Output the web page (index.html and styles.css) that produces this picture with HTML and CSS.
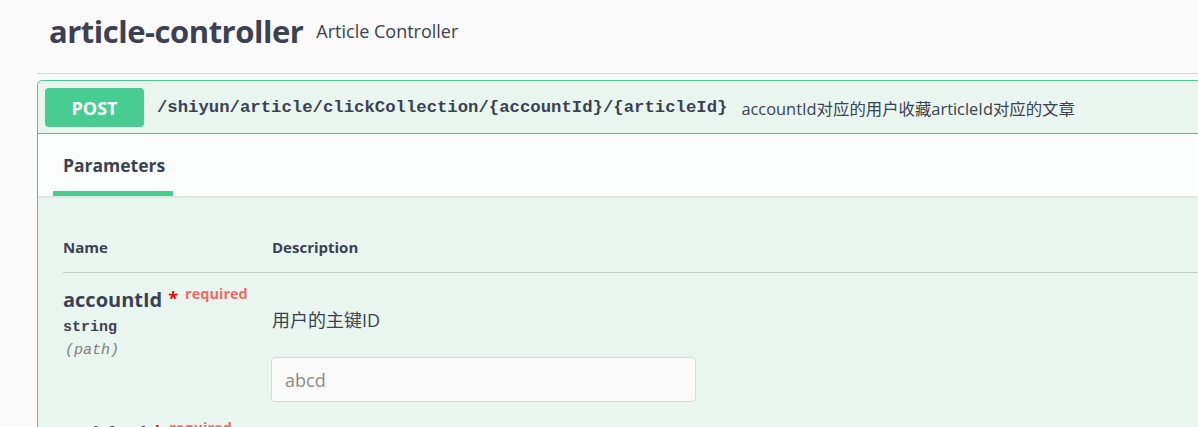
FILE: index.html
```html
<!DOCTYPE html>
<html lang="zh-CN">
<head>
<meta charset="utf-8">
<title>article-controller</title>
<link rel="stylesheet" href="styles.css">
</head>
<body>
<div class="page">
  <section class="tag">
    <h3 class="tag-title">
      <span class="tag-name">article-controller</span>
      <small class="tag-desc">Article Controller</small>
    </h3>
    <div class="opblock">
      <div class="summary">
        <span class="method">POST</span>
        <span class="path">/shiyun/article/clickCollection/{accountId}/{articleId}</span>
        <span class="summary-desc">accountId对应的用户收藏articleId对应的文章</span>
      </div>
      <div class="opbody">
        <div class="section-header">
          <div class="tab"><span class="tab-label">Parameters</span></div>
        </div>
        <div class="params">
          <div class="params-head">
            <div class="col-name">Name</div>
            <div class="col-desc">Description</div>
          </div>
          <div class="param-row">
            <div class="param-name">
              <div class="pname">accountId<span class="star">*</span><span class="req">required</span></div>
              <div class="ptype">string</div>
              <div class="pin">(path)</div>
            </div>
            <div class="param-desc">
              <div class="pdesc">用户的主键ID</div>
              <input class="pinput" type="text" placeholder="abcd">
            </div>
          </div>
          <div class="param-row">
            <div class="param-name">
              <div class="pname">articleId<span class="star">*</span><span class="req">required</span></div>
              <div class="ptype">string</div>
              <div class="pin">(path)</div>
            </div>
            <div class="param-desc">
              <div class="pdesc">文章的主键ID</div>
              <input class="pinput" type="text" placeholder="abcd">
            </div>
          </div>
        </div>
      </div>
    </div>
  </section>
</div>
</body>
</html>
```

FILE: styles.css
```css
html, body {
  margin: 0;
  padding: 0;
  background: #fafafa;
  overflow: hidden;
}
body {
  font-family: "Open Sans", "Noto Sans CJK SC", sans-serif;
  color: #3b4151;
}
.page {
  width: 1500px;
  padding-left: 37px;
}
.tag-title {
  margin: 0;
  display: flex;
  align-items: center;
  padding: 6px 0 16px 12px;
  height: 51px;
  border-bottom: 1px solid #d3d4d7;
}
.tag-name {
  font-size: 31px;
  font-weight: 700;
  letter-spacing: -0.48px;
  line-height: 51px;
}
.tag-desc {
  font-size: 18px;
  font-weight: 400;
  margin-left: 13px;
  padding-bottom: 2px;
}
.opblock {
  margin-top: 6px;
  border: 1px solid #49cc90;
  border-radius: 5px;
  background: #e8f6ef;
}
.summary {
  display: flex;
  align-items: center;
  padding: 7px 6px 6px 7px;
  border-bottom: 1px solid #49cc90;
}
.method {
  width: 99px;
  height: 39px;
  display: flex;
  align-items: center;
  justify-content: center;
  background: #49cc90;
  color: #fff;
  border-radius: 4px;
  font-size: 18px;
  font-weight: 700;
}
.path {
  padding: 0 12px 0 13px;
  font-family: "Liberation Mono", "DejaVu Sans Mono", monospace;
  font-size: 17.3px;
  font-weight: 700;
  color: #3b4151;
}
.summary-desc {
  font-size: 16.4px;
  margin-left: 2px;
  font-family: "Open Sans", "Noto Sans CJK SC", sans-serif;
}
.section-header {
  height: 62px;
  background: #fafdfc;
  box-shadow: 0 1px 2px rgba(0, 0, 0, .1);
  padding-left: 15px;
}
.tab {
  width: 120px;
  height: 62px;
  display: flex;
  flex-direction: column;
  justify-content: flex-end;
}
.tab-label {
  font-size: 17.5px;
  font-weight: 700;
  line-height: 24px;
  padding-left: 10px;
  margin-bottom: 14px;
}
.tab::after {
  content: "";
  display: block;
  height: 5px;
  background: #49cc90;
}
.params {
  padding: 26px 0 0 25px;
}
.params-head,
.param-row {
  display: grid;
  grid-template-columns: 209px 1fr;
}
.params-head {
  font-size: 15px;
  font-weight: 700;
  line-height: 20px;
  padding: 15px 0 15px;
  border-bottom: 1px solid #c5cfcd;
}
.param-row {
  padding: 8px 0 5px;
}
.pname {
  font-size: 20px;
  font-weight: 700;
  line-height: 26px;
}
.star {
  color: #f00;
  font-size: 18px;
  margin-left: 6px;
  vertical-align: 2px;
}
.req {
  color: rgba(255, 0, 0, .6);
  font-size: 14.5px;
  font-weight: 700;
  margin-left: 7px;
  vertical-align: 8px;
}
.ptype {
  margin-top: 5px;
  font-family: "Liberation Mono", "DejaVu Sans Mono", monospace;
  font-size: 15px;
  font-weight: 700;
  line-height: 20px;
}
.pin {
  margin-top: 3px;
  font-family: "Liberation Mono", "DejaVu Sans Mono", monospace;
  font-size: 15px;
  font-style: italic;
  color: #808080;
  line-height: 20px;
  padding-left: 2px;
}
.pdesc {
  margin-top: 26px;
  font-size: 18px;
  line-height: 26px;
}
.pinput {
  display: block;
  box-sizing: border-box;
  margin-top: 24px;
  width: 425px;
  height: 45px;
  margin-left: -1px;
  border: 1px solid #d9d9d9;
  border-radius: 4px;
  background: #fafafa;
  padding: 0 13px;
  font-family: "Open Sans", "Noto Sans CJK SC", sans-serif;
  font-size: 18px;
  color: #3b4151;
  outline: none;
}
.pinput::placeholder {
  color: #8b8b8b;
}
```
